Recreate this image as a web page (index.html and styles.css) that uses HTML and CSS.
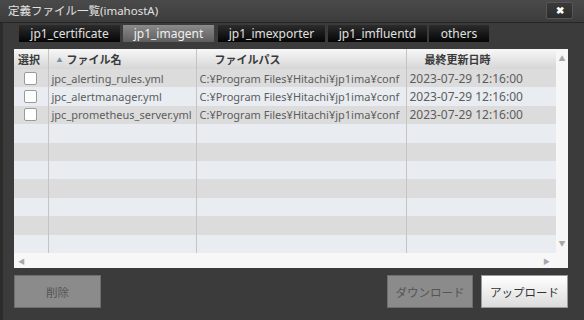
FILE: index.html
```html
<!DOCTYPE html>
<html>
<head>
	<title>定義ファイル一覧</title>
	<link rel="stylesheet" href="styles.css">
</head>
<body>
	<div class="dialog">
		<div class="titlebar">
			<span class="title">定義ファイル一覧(imahostA)</span>
			<span class="close">&#10006;</span>
		</div>

		<div class="content">
			<ul class="tabs">
				<li class="t1">jp1_certificate</li>
				<li class="t2 selected">jp1_imagent</li>
				<li class="t3">jp1_imexporter</li>
				<li class="t4">jp1_imfluentd</li>
				<li class="t5">others</li>
			</ul>

			<div class="grid">
				<div class="grid-body">
					<table>
						<colgroup>
							<col class="c-sel">
							<col class="c-name">
							<col class="c-path">
							<col class="c-date">
						</colgroup>
						<thead>
							<tr>
								<th class="h-sel">選択</th>
								<th><span class="sort">&#9650;</span>ファイル名</th>
								<th>ファイルパス</th>
								<th>最終更新日時</th>
							</tr>
						</thead>
						<tbody>
							<tr>
								<td class="sel"><span class="check"></span></td>
								<td>jpc_alerting_rules.yml</td>
								<td>C:¥Program Files¥Hitachi¥jp1ima¥conf</td>
								<td class="date">2023-07-29 12:16:00</td>
							</tr>
							<tr>
								<td class="sel"><span class="check"></span></td>
								<td>jpc_alertmanager.yml</td>
								<td>C:¥Program Files¥Hitachi¥jp1ima¥conf</td>
								<td class="date">2023-07-29 12:16:00</td>
							</tr>
							<tr>
								<td class="sel"><span class="check"></span></td>
								<td>jpc_prometheus_server.yml</td>
								<td>C:¥Program Files¥Hitachi¥jp1ima¥conf</td>
								<td class="date">2023-07-29 12:16:00</td>
							</tr>
							<tr><td></td><td></td><td></td><td></td></tr>
							<tr><td></td><td></td><td></td><td></td></tr>
							<tr><td></td><td></td><td></td><td></td></tr>
							<tr><td></td><td></td><td></td><td></td></tr>
							<tr><td></td><td></td><td></td><td></td></tr>
							<tr><td></td><td></td><td></td><td></td></tr>
							<tr><td></td><td></td><td></td><td></td></tr>
						</tbody>
					</table>
				</div>
				<div class="vscroll">
					<span class="arrow">&#9650;</span>
					<span class="arrow">&#9660;</span>
				</div>
				<div class="hscroll">
					<span class="arrow">&#9664;</span>
					<span class="arrow">&#9654;</span>
				</div>
				<div class="corner"></div>
			</div>

			<div class="buttons">
				<button class="btn disabled">削除</button>
				<span class="spacer"></span>
				<button class="btn disabled dl">ダウンロード</button>
				<button class="btn up">アップロード</button>
			</div>
		</div>
	</div>
</body>
</html>
```

FILE: styles.css
```css
*{
	margin: 0;
	padding: 0;
	box-sizing: border-box;
}
body{
	width: 584px;
	height: 320px;
	background: #3a3a3a;
	font-family: "Noto Sans", "Noto Sans CJK JP", sans-serif;
	overflow: hidden;
}
ul{
	list-style: none;
}
.dialog{
	width: 584px;
	height: 320px;
	display: flex;
	flex-direction: column;
	background: #3b3b3b;
}
.titlebar{
	height: 23px;
	display: flex;
	align-items: center;
	padding: 0 11px 0 8px;
	background: linear-gradient(#4a4a4a, #3c3c3c);
	border-bottom: 1px solid #262626;
}
.title{
	flex: 1;
	color: #e2e2e2;
	font-size: 11.5px;
	padding-bottom: 2px;
}
.close{
	width: 27px;
	height: 17px;
	margin-top: -2px;
	display: flex;
	align-items: center;
	justify-content: center;
	background: linear-gradient(#3a3a3a, #2c2c2c);
	border: 1px solid #565656;
	border-radius: 2px;
	color: #fff;
	font-size: 10px;
	font-weight: bold;
}
.content{
	flex: 1;
	display: flex;
	flex-direction: column;
	border-left: 3px solid #2b2b2b;
}
.tabs{
	display: flex;
	margin: 2px 0 0 16px;
	height: 17px;
}
.tabs li{
	height: 17px;
	line-height: 17px;
	text-align: center;
	color: #e0e0e0;
	font-size: 12px;
	background: linear-gradient(#2c2c2c, #050505);
	margin-right: 3px;
}
.tabs .t1{ width: 101px; }
.tabs .t2{ width: 91px; margin-right: 4px; }
.tabs .t3{ width: 107px; }
.tabs .t4{ width: 99px; margin-right: 2px; }
.tabs .t5{ width: 60px; }
.tabs .selected{
	background: linear-gradient(#8a8a8a, #5e5e5e);
	color: #f0f0f0;
}
.grid{
	margin: 7px 0 0 11px;
	width: 554px;
	height: 219px;
	display: grid;
	grid-template-columns: 542px 12px;
	grid-template-rows: 204px 15px;
}
.grid-body{
	overflow: hidden;
	background: #e9edf1;
}
table{
	table-layout: fixed;
	border-collapse: collapse;
	width: 542px;
}
.c-sel{ width: 34px; }
.c-name{ width: 148px; }
.c-path{ width: 210px; }
.c-date{ width: 150px; }
th{
	height: 20px;
	text-align: left;
	padding-left: 18px;
	font-size: 11px;
	font-weight: bold;
	color: #3a3a3a;
	background: linear-gradient(#f7f7f7, #d6d6d6);
	border-right: 1px solid #c4c4c4;
	white-space: nowrap;
}
th.h-sel{
	padding-left: 4px;
}
.sort{
	font-size: 6px;
	color: #7f8fa8;
	margin: 0 4px 0 -10px;
	vertical-align: 2px;
}
td{
	height: 18.4px;
	padding: 0 0 0 3px;
	font-size: 11px;
	color: #5c5c5c;
	border-right: 1px solid #c4c4c4;
	white-space: nowrap;
	overflow: hidden;
}
td.date{
	font-size: 12px;
}
tbody tr:nth-child(odd){
	background: #dcdcdc;
}
tbody tr:nth-child(even){
	background: #e9edf1;
}
td.sel{
	padding-left: 10px;
}
.check{
	display: block;
	width: 13px;
	height: 13px;
	background: #fff;
	border: 1px solid #9a9a9a;
	border-radius: 2px;
}
.vscroll{
	background: #f7f7f7;
	display: flex;
	flex-direction: column;
	justify-content: space-between;
	align-items: center;
	padding: 4px 0 5px;
}
.hscroll{
	background: #f7f7f7;
	display: flex;
	justify-content: space-between;
	align-items: center;
	padding: 0 6px 0 4px;
}
.corner{
	background: #f7f7f7;
}
.arrow{
	color: #a8a8a8;
	font-size: 7px;
}
.buttons{
	display: flex;
	margin: 7px 0 0 11px;
	width: 554px;
	height: 33px;
}
.spacer{
	flex: 1;
}
.btn{
	height: 33px;
	font-family: "Noto Sans CJK JP", sans-serif;
	font-size: 11.5px;
	border: 1px solid #6e6e6e;
}
.btn.disabled{
	width: 87px;
	background: #8b8b8b;
	color: #555;
}
.btn.dl{
	width: 86px;
	margin-right: 8px;
}
.btn.up{
	width: 87px;
	background: linear-gradient(#ffffff, #dcdcdc);
	border-color: #9a9a9a;
	color: #333;
}
```
